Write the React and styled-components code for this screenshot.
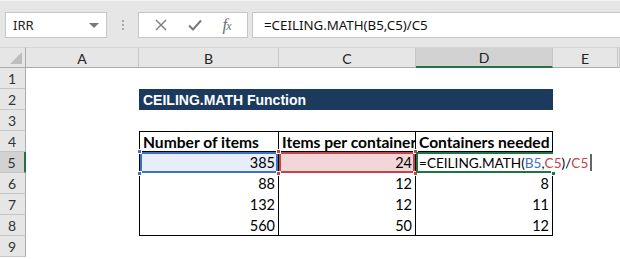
import styled, { createGlobalStyle } from 'styled-components';

const GlobalStyle = createGlobalStyle`
  html, body {
    margin: 0;
    padding: 0;
    background: #ffffff;
    overflow: hidden;
  }
  * {
    box-sizing: border-box;
  }
`;

const Window = styled.div`
  width: 620px;
  height: 259px;
  display: flex;
  flex-direction: column;
  overflow: hidden;
  font-family: Lato, 'Liberation Sans', sans-serif;
`;

const FormulaBar = styled.div`
  height: 47px;
  background: #e6e6e6;
  border-top: 1px solid #f4f4f4;
  display: flex;
  align-items: flex-start;
  padding: 11px 0 0 5px;
`;

const NameBox = styled.div`
  width: 102px;
  height: 26px;
  background: #fff;
  border: 1px solid #c6c6c6;
  display: flex;
  align-items: center;
  justify-content: space-between;
  padding: 0 7px 0 7px;
  font-family: 'Noto Sans', 'Open Sans', sans-serif;
  font-size: 13px;
  color: #222;
`;

const Caret = styled.span`
  width: 0;
  height: 0;
  border-left: 5px solid transparent;
  border-right: 5px solid transparent;
  border-top: 5px solid #777;
`;

const Grip = styled.div`
  width: 31px;
  height: 26px;
  display: flex;
  flex-direction: column;
  align-items: center;
  justify-content: center;
  gap: 2px;
`;

const Dot = styled.span`
  width: 2px;
  height: 2px;
  background: #a8a8a8;
`;

const ButtonBox = styled.div`
  width: 110px;
  height: 26px;
  background: #fff;
  border: 1px solid #c6c6c6;
  display: flex;
  align-items: center;
  justify-content: space-around;
  padding: 0 6px;
  color: #7a7a7a;
`;

const Fx = styled.span`
  font-family: 'Liberation Serif', serif;
  font-style: italic;
  font-size: 17px;
  color: #6e6e6e;
  letter-spacing: -1px;
  & > small {
    font-size: 12px;
  }
`;

const FormulaInput = styled.div`
  flex: 1;
  height: 26px;
  margin-left: 4px;
  background: #fff;
  border: 1px solid #c6c6c6;
  border-right: none;
  display: flex;
  align-items: center;
  padding-left: 11px;
  font-family: 'Noto Sans', 'Open Sans', sans-serif;
  font-size: 13.3px;
  color: #111;
`;

const Sheet = styled.div`
  display: grid;
  grid-template-columns: 26px 113px 140px 137px 137px 65px 2px;
  grid-template-rows: 21px repeat(9, 21px);
`;

const Corner = styled.div`
  background: #e6e6e6;
  border-top: 1px solid #d6d6d6;
  border-right: 1px solid #ababab;
  border-bottom: 1px solid #ababab;
  display: flex;
  align-items: flex-end;
  justify-content: flex-end;
  padding: 0 3px 3px 0;
`;

const CornerMark = styled.span`
  width: 0;
  height: 0;
  border-left: 12px solid transparent;
  border-bottom: 12px solid #bdbdbd;
`;

const ColHead = styled.div`
  background: ${(p) => (p.$active ? '#d2d2d2' : '#e6e6e6')};
  border-top: 1px solid #d6d6d6;
  border-right: 1px solid #c6c6c6;
  border-bottom: ${(p) => (p.$active ? '2px solid #217346' : '1px solid #ababab')};
  display: flex;
  align-items: center;
  justify-content: center;
  font-size: 14px;
  color: #222;
  padding-top: 1px;
`;

const RowHead = styled.div`
  background: ${(p) => (p.$active ? '#d2d2d2' : '#e6e6e6')};
  border-bottom: 1px solid #c6c6c6;
  border-right: ${(p) => (p.$active ? '2px solid #217346' : '1px solid #ababab')};
  display: flex;
  align-items: center;
  justify-content: center;
  font-size: 14px;
  color: #333;
  padding-right: 1px;
`;

const toneColors = {
  blue: { line: '#3f6fc6', fill: '#e8eef9' },
  red: { line: '#c5444c', fill: '#f3d7d8' },
  green: { line: '#217346', fill: '#ffffff' },
};

const Cell = styled.div`
  position: relative;
  background: ${(p) => (p.$tone ? toneColors[p.$tone].fill : '#fff')};
  border-left: ${(p) => (p.$bl ? '1px solid #000' : '0')};
  border-right: ${(p) => (p.$br ? '1px solid #000' : '0')};
  border-top: ${(p) => (p.$bt ? '1px solid #000' : '0')};
  border-bottom: ${(p) => (p.$bb ? '1px solid #000' : '0')};
  box-shadow: ${(p) =>
    p.$tone === 'green'
      ? `inset 2px 0 0 ${toneColors.green.line}, inset 0 2px 0 ${toneColors.green.line}, inset 0 -2px 0 ${toneColors.green.line}`
      : p.$tone
      ? `inset 0 0 0 2px ${toneColors[p.$tone].line}`
      : 'none'};
  display: flex;
  align-items: center;
  justify-content: ${(p) => (p.$align === 'right' ? 'flex-end' : 'flex-start')};
  padding: 0 3px 0 3px;
  font-size: ${(p) => (p.$bold ? '15.6px' : p.$formula ? '13.6px' : '14.5px')};
  font-weight: ${(p) => (p.$bold ? 700 : 400)};
  color: #000;
  white-space: nowrap;
  overflow: visible;
  z-index: ${(p) => (p.$tone ? 1 : 0)};
`;

const TitleCell = styled.div`
  grid-column: 3 / 6;
  background: #1b3a5e;
  color: #fff;
  font-family: 'Liberation Sans', Arial, sans-serif;
  font-weight: 700;
  font-size: 14px;
  display: flex;
  align-items: center;
  padding-left: 4px;
`;

const Handle = styled.span`
  position: absolute;
  width: 5px;
  height: 5px;
  background: ${(p) => toneColors[p.$tone].line};
  border: 1px solid #fff;
  left: ${(p) => (p.$x === 'l' ? '-3px' : 'auto')};
  right: ${(p) => (p.$x === 'r' ? '-3px' : 'auto')};
  top: ${(p) => (p.$y === 't' ? '-3px' : 'auto')};
  bottom: ${(p) => (p.$y === 'b' ? '-3px' : 'auto')};
  z-index: 3;
`;

const Ref = styled.span`
  color: ${(p) => toneColors[p.$tone].line};
`;

const Cursor = styled.span`
  flex-shrink: 0;
  display: inline-block;
  width: 2px;
  height: 17px;
  margin-left: 2px;
  background: #666;
`;

const Blank = styled.div`
  background: #fff;
`;

const columns = ['A', 'B', 'C', 'D', 'E'];

const tableRows = [
  ['385', '24'],
  ['88', '12', '8'],
  ['132', '12', '11'],
  ['560', '50', '12'],
];

const Formula = () => (
  <>
    =CEILING.MATH(<Ref $tone="blue">B5</Ref>,<Ref $tone="red">C5</Ref>)/
    <Ref $tone="red">C5</Ref>
  </>
);

const App = () => {
  return (
    <Window>
      <GlobalStyle />
      <FormulaBar>
        <NameBox>
          IRR
          <Caret />
        </NameBox>
        <Grip>
          <Dot />
          <Dot />
          <Dot />
        </Grip>
        <ButtonBox>
          <svg width="12" height="12" viewBox="0 0 12 12">
            <path d="M1 1L11 11M11 1L1 11" stroke="#7a7a7a" strokeWidth="1.4" fill="none" />
          </svg>
          <svg width="14" height="12" viewBox="0 0 14 12">
            <path d="M1 6.5L5 10.5L13 1.5" stroke="#7a7a7a" strokeWidth="2" fill="none" />
          </svg>
          <Fx>
            f<small>x</small>
          </Fx>
        </ButtonBox>
        <FormulaInput>=CEILING.MATH(B5,C5)/C5</FormulaInput>
      </FormulaBar>

      <Sheet>
        <Corner>
          <CornerMark />
        </Corner>
        {columns.map((c) => (
          <ColHead key={c} $active={c === 'D'}>
            {c}
          </ColHead>
        ))}
        <ColHead />

        {[1, 2, 3, 4, 5, 6, 7, 8, 9].map((n) => {
          const cells = [];
          cells.push(
            <RowHead key={`h${n}`} $active={n === 5}>
              {n}
            </RowHead>
          );
          cells.push(<Blank key={`a${n}`} />);

          if (n === 2) {
            cells.push(<TitleCell key="title">CEILING.MATH Function</TitleCell>);
          } else if (n === 4) {
            cells.push(
              <Cell key="b4" $bold $bl $br $bt $bb>
                Number of items
              </Cell>,
              <Cell key="c4" $bold $br $bt $bb>
                Items per container
              </Cell>,
              <Cell key="d4" $bold $br $bt $bb>
                Containers needed
              </Cell>
            );
          } else if (n === 5) {
            cells.push(
              <Cell key="b5" $bl $br $align="right" $tone="blue">
                {tableRows[0][0]}
                <Handle $tone="blue" $x="l" $y="t" />
                <Handle $tone="blue" $x="l" $y="b" />
              </Cell>,
              <Cell key="c5" $br $align="right" $tone="red">
                {tableRows[0][1]}
                <Handle $tone="red" $x="l" $y="t" />
                <Handle $tone="red" $x="l" $y="b" />
                <Handle $tone="red" $x="r" $y="t" />
                <Handle $tone="red" $x="r" $y="b" />
              </Cell>,
              <Cell key="d5" $tone="green" $formula>
                <Formula />
                <Cursor />
                <Handle $tone="green" $x="r" $y="b" />
              </Cell>
            );
          } else if (n >= 6 && n <= 8) {
            const r = tableRows[n - 5];
            cells.push(
              <Cell key={`b${n}`} $bl $br $bb={n === 8} $align="right">
                {r[0]}
              </Cell>,
              <Cell key={`c${n}`} $br $bb={n === 8} $align="right">
                {r[1]}
              </Cell>,
              <Cell key={`d${n}`} $br $bb={n === 8} $align="right">
                {r[2]}
              </Cell>
            );
          } else {
            cells.push(<Blank key={`b${n}`} />, <Blank key={`c${n}`} />, <Blank key={`d${n}`} />);
          }

          cells.push(<Blank key={`e${n}`} />, <Blank key={`f${n}`} />);
          return cells;
        })}
      </Sheet>
    </Window>
  );
};

export default App;
